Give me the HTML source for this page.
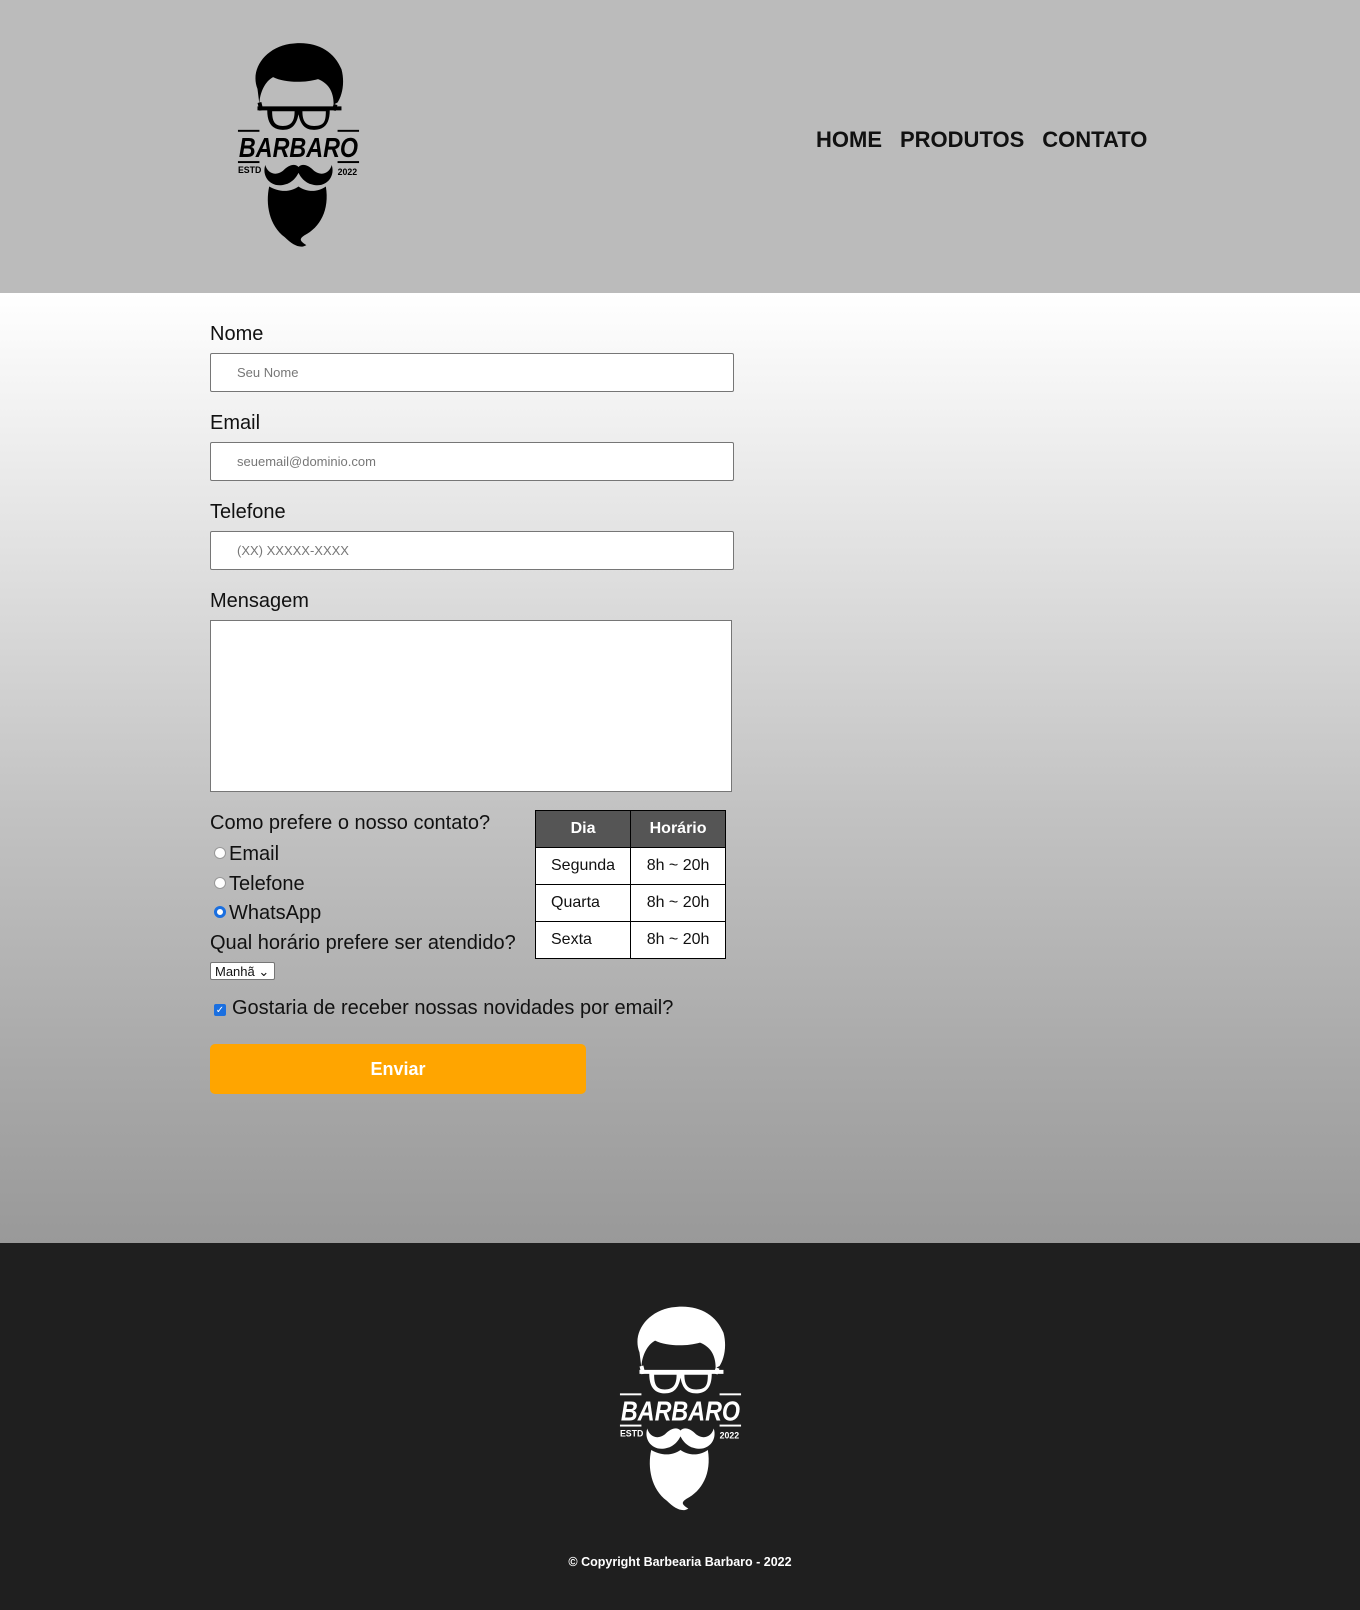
<!DOCTYPE html>
<html><head><meta charset="utf-8"><style>
*{box-sizing:border-box;margin:0;padding:0}
body{width:1360px;height:1610px;font-family:"Liberation Sans",Arial,sans-serif;color:#111;overflow:hidden}
header{height:293px;background:#bbb;position:relative}
.logo{position:absolute;left:236px;top:38px;width:125px;height:213px}
nav{position:absolute;left:816px;top:127px;font-weight:bold;font-size:22px;word-spacing:0}
nav span{margin-right:18px}
main{height:950px;background:linear-gradient(#fff 0px,#e2e2e2 250px,#c2c2c2 520px,#a8a8a8 780px,#999 950px);position:relative}
.lbl{position:absolute;left:210px;font-size:20px}
.inp{position:absolute;left:210px;width:524px;height:39px;background:#fff;border:1px solid #767676;border-radius:2px;font-size:13px;color:#777;padding:11px 0 0 26px}
.ta{position:absolute;left:210px;top:327px;width:522px;height:172px;background:#fff;border:1px solid #767676}
.r{position:absolute;left:214px;font-size:20px}
.r i{display:inline-block;width:12px;height:12px;border-radius:50%;background:#fff;border:1px solid #999;margin-right:3px;vertical-align:1px}
.r i.on{border:3px solid #1a6fe0;background:#fff}
table{position:absolute;left:535px;top:517px;border-collapse:collapse;font-size:16px}
td,th{border:1px solid #000;height:37px;background:#fff;padding:0 15px;text-align:left}
th{background:#555;color:#fff;text-align:center}
td:last-child{text-align:center}
.sel{position:absolute;left:210px;top:669px;width:65px;height:18px;background:#fff;border:1px solid #767676;font-size:13px;padding:1px 4px;border-radius:2px}
.btn{position:absolute;left:210px;top:751px;width:376px;height:50px;background:#ffa500;border-radius:5px;color:#fff;font-weight:bold;font-size:18px;text-align:center;line-height:50px}
footer{height:367px;background:#1f1f1f;position:relative;color:#fff}
.flogo{position:absolute;left:618px;top:56px;width:125px;height:218px}
.copy{position:absolute;top:312px;width:100%;text-align:center;font-size:12.5px;font-weight:bold}
</style></head><body>
<svg width="0" height="0" style="position:absolute"><defs>
<g id="lg">
<path d="M22 50 C14 30 30 8 55 4 C80 0 100 10 108 30 C112 45 108 58 104 64 L100 66 C100 52 94 44 84 40 C70 44 50 44 38 38 C30 42 24 54 24 66 Z"/>
<path d="M24 64 L26 72 M102 66 L100 72" stroke="currentColor" stroke-width="4"/>
<path d="M22 68 H108 V72 H96 C96 86 90 92 80 92 C70 92 66 86 64 76 C62 86 58 92 48 92 C38 92 32 86 32 72 H22 Z M37 73 C37 84 40 88 48 88 C56 88 60 84 60 73 Z M68 73 C68 84 72 88 80 88 C90 88 92 84 92 73 Z"/>
<rect x="2" y="92" width="22" height="2"/><rect x="104" y="92" width="22" height="2"/>
<rect x="2" y="124" width="22" height="2"/><rect x="104" y="124" width="22" height="2"/>
<text x="64" y="120" text-anchor="middle" font-family="Liberation Sans,sans-serif" font-weight="bold" font-size="28" font-style="italic" textLength="122" lengthAdjust="spacingAndGlyphs">BARBARO</text>
<text x="2" y="136" font-family="Liberation Sans,sans-serif" font-weight="bold" font-size="9">ESTD</text>
<text x="104" y="138" font-family="Liberation Sans,sans-serif" font-weight="bold" font-size="9">2022</text>
<path d="M30 128 C26 140 36 152 50 148 C58 146 62 140 64 136 C66 140 70 146 78 148 C92 152 102 140 98 128 C96 136 88 140 80 134 C74 128 68 126 64 130 C60 126 54 128 48 134 C40 140 32 136 30 128 Z"/>
<path d="M34 150 C30 168 34 190 50 202 C58 210 66 214 72 210 C66 206 64 204 70 200 C86 192 96 174 92 150 C84 156 72 156 64 150 C56 156 44 156 34 150 Z"/>
</g></defs></svg>
<header>
<svg class="logo" viewBox="0 0 128 214" style="color:#000"><use href="#lg" fill="#000"/></svg>
<nav><span>HOME</span><span>PRODUTOS</span><span style="margin:0">CONTATO</span></nav>
</header>
<main>
<div class="lbl" style="top:30px">Nome</div>
<div class="inp" style="top:60px">Seu Nome</div>
<div class="lbl" style="top:119px">Email</div>
<div class="inp" style="top:149px">seuemail@dominio.com</div>
<div class="lbl" style="top:208px">Telefone</div>
<div class="inp" style="top:238px">(XX) XXXXX-XXXX</div>
<div class="lbl" style="top:297px">Mensagem</div>
<div class="ta"></div>
<div class="lbl" style="top:519px">Como prefere o nosso contato?</div>
<div class="r" style="top:550px"><i></i>Email</div>
<div class="r" style="top:580px"><i></i>Telefone</div>
<div class="r" style="top:609px"><i class="on"></i>WhatsApp</div>
<div class="lbl" style="top:639px">Qual horário prefere ser atendido?</div>
<div class="sel">Manhã ⌄</div>
<div class="r" style="top:704px"><i style="border-radius:2px;background:#1a6fe0;border-color:#1a6fe0;color:#fff;font-size:10px;font-style:normal;text-align:center;line-height:11px;margin-right:6px">✓</i>Gostaria de receber nossas novidades por email?</div>
<table><tr><th style="width:95px">Dia</th><th style="width:95px">Horário</th></tr>
<tr><td>Segunda</td><td>8h ~ 20h</td></tr><tr><td>Quarta</td><td>8h ~ 20h</td></tr><tr><td>Sexta</td><td>8h ~ 20h</td></tr></table>
<div class="btn">Enviar</div>
</main>
<footer>
<svg class="flogo" viewBox="0 0 128 214" style="color:#fff"><use href="#lg" fill="#fff"/></svg>
<div class="copy">© Copyright Barbearia Barbaro - 2022</div>
</footer>
</body></html>
